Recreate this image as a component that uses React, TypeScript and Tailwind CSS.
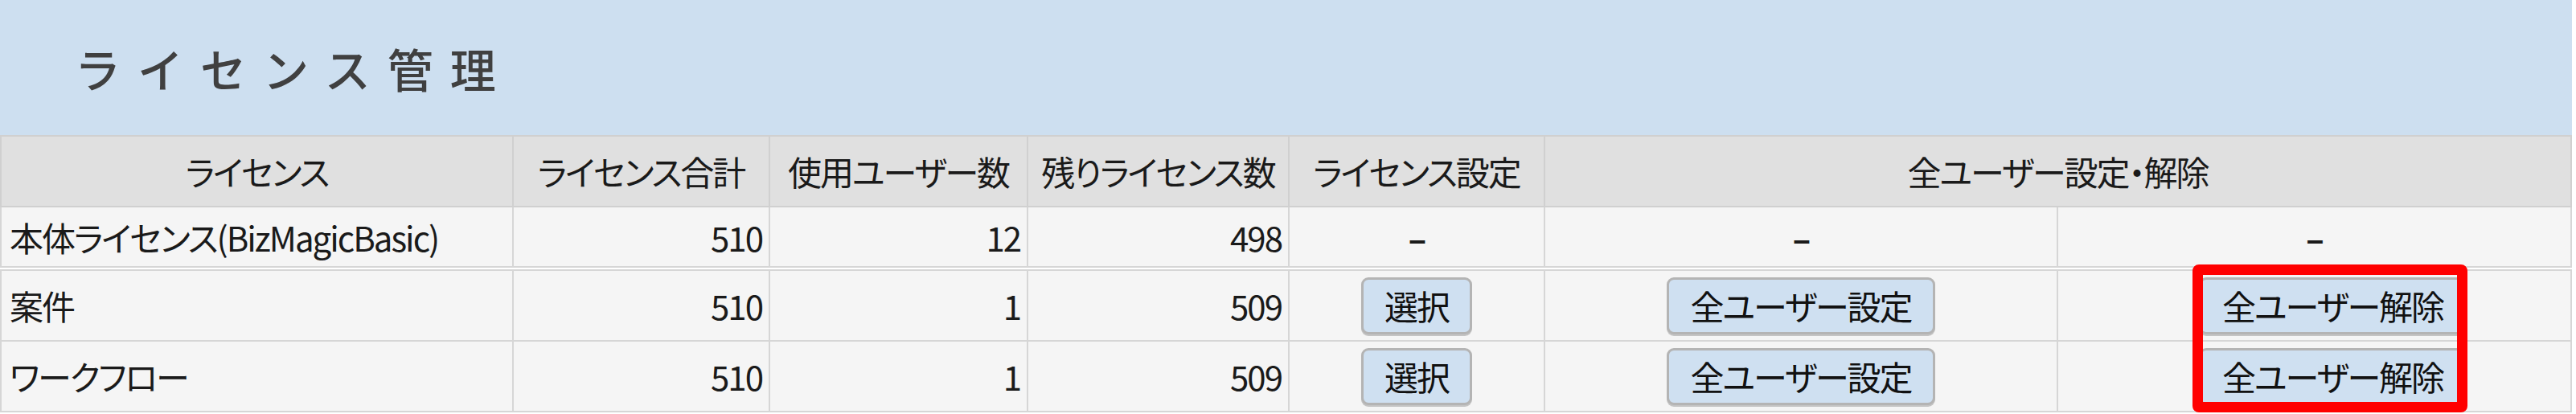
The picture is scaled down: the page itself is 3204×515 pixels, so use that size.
const rows = [
  { name: "本体ライセンス(BizMagicBasic)", total: 510, used: 12, rest: 498, buttons: false },
  { name: "案件", total: 510, used: 1, rest: 509, buttons: true },
  { name: "ワークフロー", total: 510, used: 1, rest: 509, buttons: true },
];

const font = "[font-family:'Noto_Sans_CJK_JP','Noto_Sans',sans-serif]";

function Btn({ label, className = "" }: { label: string; className?: string }) {
  return (
    <button
      className={`h-[71px] rounded-[9px] border-[3px] border-[#b4b4b4] bg-[#cfe0f1] px-[26px] text-[42px] leading-none tracking-[-2px] text-[#111] shadow-[0_2px_0_#c4c4c4] ${className}`}
    >
      {label}
    </button>
  );
}

export default function App() {
  const th = "border-2 border-[#d0d0d0] bg-[#e0e0e0] font-normal text-center";
  const td = "border-2 border-[#d6d6d6] bg-[#f5f5f5]";

  return (
    <div className={`relative w-[3199px] bg-white text-[#1a1a1a] ${font} [font-feature-settings:'palt']`}>
      {/* Title band */}
      <div className="flex h-[168px] items-center bg-[#cddff0] pl-[93px]">
        <h1 className="text-[57px] font-medium leading-none tracking-[21px] text-[#404040] [font-feature-settings:normal]">
          ライセンス管理
        </h1>
      </div>

      {/* License table */}
      <table className="w-full table-fixed border-collapse text-[42px] leading-none tracking-[-2px]">
        <colgroup>
          <col className="w-[637px]" />
          <col className="w-[319px]" />
          <col className="w-[321px]" />
          <col className="w-[325px]" />
          <col className="w-[318px]" />
          <col className="w-[638px]" />
          <col />
        </colgroup>
        <thead>
          <tr className="h-[88px]">
            <th className={th}>ライセンス</th>
            <th className={th}>ライセンス合計</th>
            <th className={th}>使用ユーザー数</th>
            <th className={th}>残りライセンス数</th>
            <th className={th}>ライセンス設定</th>
            <th className={th} colSpan={2}>
              全ユーザー設定・解除
            </th>
          </tr>
        </thead>
        <tbody>
          {rows.map((r, i) => (
            <>
              {i === 1 && (
                <tr key="gap" className="h-[4px]">
                  <td colSpan={7} className="bg-white p-0" />
                </tr>
              )}
              <tr key={r.name} className={r.buttons ? "h-[88px]" : "h-[75px]"}>
                <td className={`${td} pl-[10px]`}>{r.name}</td>
                <td className={`${td} pr-[8px] text-right`}>{r.total}</td>
                <td className={`${td} pr-[8px] text-right`}>{r.used}</td>
                <td className={`${td} pr-[8px] text-right`}>{r.rest}</td>
                <td className={`${td} text-center`}>
                  {r.buttons ? <Btn label="選択" /> : <span className="font-bold">–</span>}
                </td>
                <td className={`${td} text-center`}>
                  {r.buttons ? <Btn label="全ユーザー設定" /> : <span className="font-bold">–</span>}
                </td>
                <td className={`${td} text-center`}>
                  {r.buttons ? <Btn label="全ユーザー解除" className="ml-[46px]" /> : <span className="font-bold">–</span>}
                </td>
              </tr>
            </>
          ))}
        </tbody>
      </table>

      {/* Highlight annotation */}
      <div className="absolute left-[2727px] top-[329px] h-[184px] w-[342px] rounded-[8px] border-[13px] border-[#ff0000]" />
    </div>
  );
}
